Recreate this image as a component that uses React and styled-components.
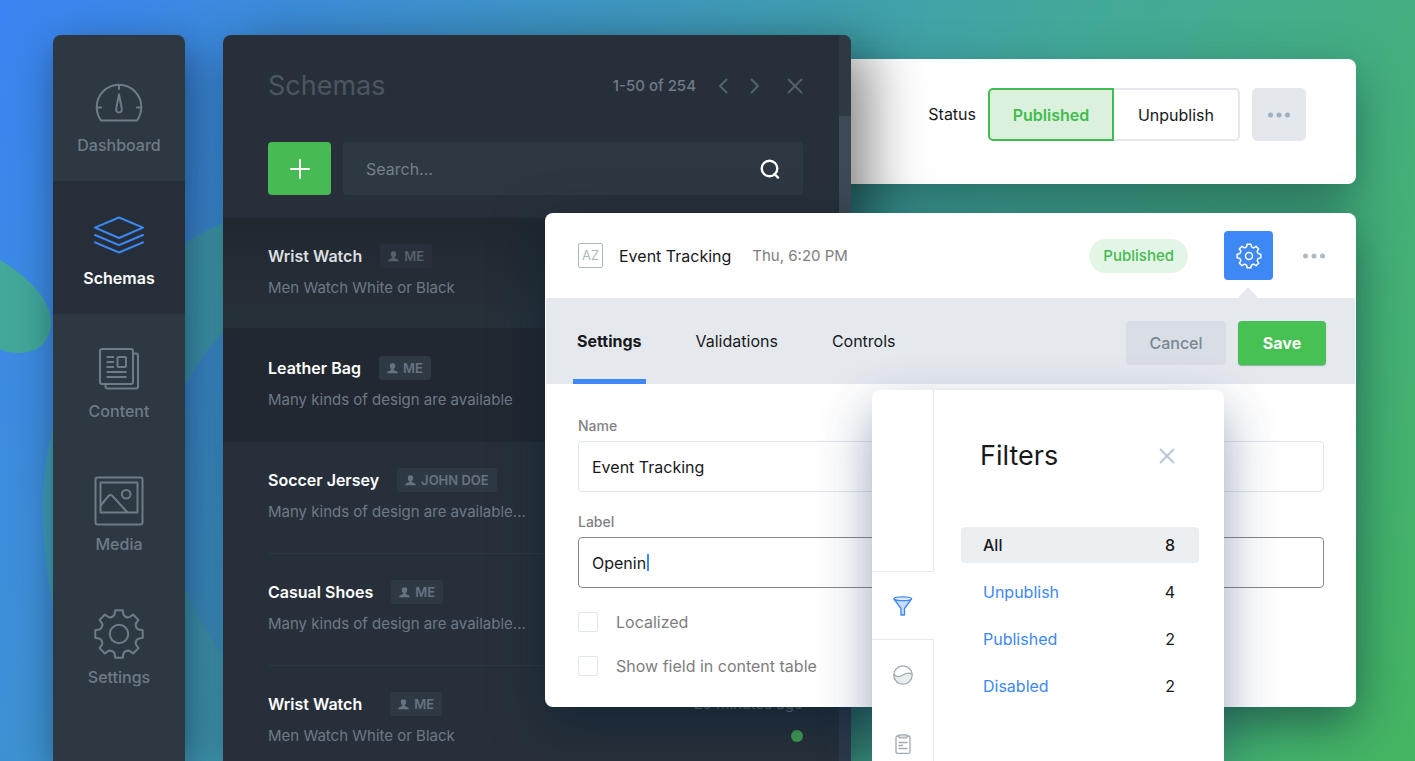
import React from "react";
import styled, { createGlobalStyle, css } from "styled-components";

const GlobalStyle = createGlobalStyle`
  *, *::before, *::after { box-sizing: border-box; }
  body {
    margin: 0;
    font-family: Inter, "Liberation Sans", sans-serif;
    font-size: 16px;
    line-height: 20px;
    color: #17191c;
    overflow: hidden;
  }
  button, input {
    font: inherit;
    color: inherit;
    margin: 0;
    padding: 0;
    border: 0;
    background: none;
  }
  button { cursor: pointer; }
  input:focus { outline: none; }
  h1, h2, h3, p, ul { margin: 0; padding: 0; font-weight: inherit; list-style: none; }
  svg { display: block; }
`;

/* ---------- desktop ---------- */

const Desktop = styled.div`
  position: relative;
  isolation: isolate;
  display: grid;
  height: 100vh;
  overflow: hidden;
  grid-template-columns: 53px 132px 38px 322fr 306fr 21fr 352fr 132fr 59px;
  grid-template-rows: 35px 24px 125px 29px 177px 317px minmax(0, 1fr);
  background: linear-gradient(118deg, #3b84f3 0%, #3f9bbd 38%, #42a999 60%, #44b07d 80%, #44b661 100%);
`;

const Backdrop = styled.svg`
  position: absolute;
  inset: 0;
  width: 100%;
  height: 100%;
  z-index: -1;
`;

/* ---------- sidebar ---------- */

const Sidebar = styled.nav`
  grid-area: 2 / 2 / -1 / 3;
  z-index: 2;
  padding-top: 13px;
  border-radius: 8px 8px 0 0;
  background: #2e3842;
  box-shadow: 6px 14px 44px rgba(12, 30, 60, 0.6);
`;

const NavItem = styled.a`
  display: flex;
  flex-direction: column;
  align-items: center;
  gap: 8px;
  height: 133px;
  padding-top: 29px;
  font-weight: 500;
  text-decoration: none;
  color: ${(p) => (p.$active ? "#ffffff" : "#6e7b88")};
  background: ${(p) => (p.$active ? "#262f39" : "transparent")};
  ${(p) => p.$active && css`font-weight: 600;`}
  svg { color: ${(p) => (p.$active ? "#3d89f8" : "#6e7b88")}; }
`;

/* ---------- schemas window ---------- */

const SchemasPanel = styled.section`
  grid-area: 2 / 4 / -1 / 6;
  z-index: 3;
  display: flex;
  min-height: 0;
  overflow: hidden;
  border-radius: 8px 8px 0 0;
  background: #27303a;
`;

const SchemasShadow = styled.div`
  grid-area: 2 / 4 / -1 / 6;
  z-index: 1;
  border-radius: 8px 8px 0 0;
  box-shadow: 14px 16px 56px 2px rgba(0, 0, 0, 0.5);
`;

const SchemasMain = styled.div`
  flex: 1;
  min-width: 0;
`;

const SchemasTop = styled.header`
  padding: 31px 36px 23px 45px;
`;

const TitleBar = styled.div`
  display: flex;
  align-items: center;
  height: 40px;
`;

const PanelTitle = styled.h1`
  flex: 1;
  font-size: 27px;
  line-height: 40px;
  font-weight: 400;
  color: #4c5661;
`;

const PageCount = styled.span`
  margin-right: 19px;
  font-size: 15px;
  font-weight: 500;
  color: #6f7b88;
`;

const PagerButton = styled.button`
  display: grid;
  place-items: center;
  width: 16px;
  height: 20px;
  color: #56616d;
  margin-left: ${(p) => p.$gap || 0}px;
`;

const Tools = styled.div`
  display: flex;
  gap: 12px;
  height: 53px;
  margin-top: 36px;
`;

const AddButton = styled.button`
  display: grid;
  place-items: center;
  width: 63px;
  border-radius: 4px;
  background: #46bb54;
  color: #fff;
`;

const SearchBox = styled.label`
  display: flex;
  flex: 1;
  align-items: center;
  padding: 0 23px;
  border-radius: 4px;
  background: #2e3842;
  color: #fff;
`;

const SearchInput = styled.input`
  flex: 1;
  min-width: 0;
  &::placeholder { color: #74808c; opacity: 1; }
`;

const ScrollTrack = styled.div`
  width: 12px;
  padding-top: 81px;
  background: #2f3944;
`;

const ScrollThumb = styled.div`
  height: 100%;
  background: linear-gradient(#3d4956 0 60%, #2f3a4a 85%);
`;

const RowBody = styled.div`
  display: flex;
  flex: 1;
  justify-content: space-between;
  padding: 26px 36px 0 0;
  border-bottom: 1px solid ${(p) => (p.$line ? "#2d3843" : "transparent")};
`;

const RowHead = styled.div`
  display: flex;
  align-items: center;
  gap: ${(p) => (p.$loose ? 28 : 18)}px;
  height: 24px;
`;

const RowTitle = styled.h2`
  font-size: 16px;
  font-weight: 600;
  color: #fff;
`;

const Owner = styled.span`
  display: flex;
  align-items: center;
  gap: 5px;
  height: 24px;
  padding: 0 8px;
  border-radius: 3px;
  font-size: 13px;
  font-weight: 600;
  color: #667382;
  background: #2f3944;
`;

const RowText = styled.p`
  margin-top: 10px;
  font-size: 15px;
  color: #6d7987;
`;

const SchemaRow = styled.li`
  display: flex;
  height: 112px;
  padding-left: 45px;
  ${(p) => p.$first && css`
    background: linear-gradient(#1f272f 0, #242c35 50%, #27313a 100%);
    ${RowTitle} { color: #dcdee0; }
    ${Owner} { color: #56616d; background: #28313b; }
  `}
  ${(p) => p.$selected && css`
    position: relative;
    height: 114px;
    margin-top: -2px;
    padding-top: 2px;
    background: #212831;
  `}
`;

const RowMeta = styled.div`
  display: flex;
  flex-direction: column;
  align-items: flex-end;
  gap: 16px;
  padding-top: 2px;
  font-size: 15px;
  color: #6d7987;
`;

const LiveDot = styled.span`
  width: 12px;
  height: 12px;
  border-radius: 50%;
  background: #41a353;
`;

/* ---------- status window ---------- */

const StatusPanel = styled.section`
  grid-area: 3 / 5 / 4 / 9;
  display: flex;
  align-items: flex-start;
  justify-content: flex-end;
  gap: 12px;
  padding: 29px 50px 0 0;
  border-radius: 8px;
  background: #fff;
  box-shadow: 0 18px 48px rgba(14, 50, 50, 0.5);
`;

const StatusLabel = styled.span`
  line-height: 53px;
`;

const Segment = styled.div`
  display: flex;
`;

const SegmentButton = styled.button`
  width: 126px;
  height: 53px;
  border: 2px solid #e4e8ed;
  border-left: 0;
  border-radius: 0 5px 5px 0;
  ${(p) => p.$on && css`
    border: 2px solid #40bd4c;
    border-radius: 5px 0 0 5px;
    font-weight: 600;
    color: #40bd4c;
    background: #dbf1de;
  `}
`;

const MoreButton = styled.button`
  display: grid;
  place-items: center;
  width: ${(p) => (p.$filled ? 54 : 24)}px;
  height: 53px;
  border-radius: 5px;
  color: ${(p) => (p.$filled ? "#9fb0c4" : "#aeb9c7")};
  background: ${(p) => (p.$filled ? "#e4e8ed" : "transparent")};
`;

/* ---------- editor window ---------- */

const EditorPanel = styled.section`
  grid-area: 5 / 5 / 7 / 9;
  z-index: 4;
  border-radius: 8px;
  background: #fff;
  box-shadow: 0 16px 50px rgba(8, 30, 50, 0.55);
`;

const EditorHeader = styled.header`
  display: flex;
  align-items: center;
  height: 85px;
  padding: 0 30px 0 33px;
`;

const EditorTitle = styled.h2`
  margin: 0 21px 0 16px;
  font-size: 16px;
  font-weight: 400;
`;

const Stamp = styled.time`
  flex: 1;
  font-size: 15px;
  color: #7e7e80;
`;

const Pill = styled.span`
  padding: 0 14px;
  border-radius: 17px;
  font-size: 15px;
  font-weight: 500;
  line-height: 34px;
  color: #44bb50;
  background: #e3f6e5;
`;

const GearButton = styled.button`
  position: relative;
  display: grid;
  place-items: center;
  width: 49px;
  height: 49px;
  margin: 0 29px 0 36px;
  border-radius: 4px;
  color: #fff;
  background: #3d88f4;
  &::after {
    content: "";
    position: absolute;
    top: 56px;
    left: 14px;
    border: solid transparent;
    border-width: 0 10px 11px;
    border-bottom-color: #e5e9ee;
  }
`;

const TabBar = styled.div`
  display: flex;
  justify-content: space-between;
  height: 86px;
  margin: 0 1px;
  padding: 0 29px 0 27px;
  background: #e5e9ee;
`;

const Tabs = styled.div`
  display: flex;
  gap: 46px;
`;

const Tab = styled.button`
  padding: 0 4px;
  border: solid transparent;
  border-width: 5px 0;
  ${(p) => p.$active && css`
    font-weight: 700;
    border-bottom-color: #3d88f4;
  `}
`;

const Actions = styled.div`
  display: flex;
  gap: 12px;
  padding-top: 23px;
`;

const ActionButton = styled.button`
  height: 44px;
  width: ${(p) => (p.$primary ? 88 : 100)}px;
  border-radius: 4px;
  font-weight: ${(p) => (p.$primary ? 700 : 500)};
  color: ${(p) => (p.$primary ? "#fff" : "#788691")};
  background: ${(p) => (p.$primary ? "#47c153" : "#d9dee6")};
  ${(p) => p.$primary && css`box-shadow: 0 1px 1px rgba(30, 120, 50, 0.5);`}
`;

const Form = styled.form`
  padding: 32px 32px 0 33px;
`;

const Field = styled.div`
  margin-bottom: 20px;
`;

const FieldLabel = styled.label`
  display: block;
  margin-bottom: 5px;
  font-size: 14px;
  font-weight: 500;
  color: #808286;
`;

const InputBox = styled.div`
  display: flex;
  align-items: center;
  height: 51px;
  padding: 0 13px;
  border: ${(p) => (p.$focus ? "1px solid #85878a" : "1px solid #dfe5ec")};
  border-radius: 4px;
`;

const TextInput = styled.input`
  height: 24px;
  ${(p) => (p.$focus ? css`field-sizing: content;` : css`width: 100%;`)}
`;

const Caret = styled.span`
  width: 2px;
  height: 17px;
  margin-left: 1px;
  background: #3d88f4;
`;

const CheckRow = styled.label`
  display: flex;
  align-items: center;
  gap: 18px;
  height: 20px;
  margin-top: 24px;
  color: #7e7e80;
`;

const CheckBox = styled.input`
  appearance: none;
  width: 20px;
  height: 20px;
  border: 1px solid #dfe6ee;
  border-radius: 2px;
  background: #fff;
`;

/* ---------- filters window ---------- */

const FiltersPanel = styled.aside`
  grid-area: 6 / 7 / -1 / 8;
  z-index: 5;
  display: flex;
  min-height: 0;
  border-radius: 8px 8px 0 0;
  background: #fff;
  box-shadow: 0 22px 52px rgba(28, 56, 104, 0.45);
`;

const Rail = styled.div`
  display: flex;
  flex-direction: column;
  width: 62px;
  &::before {
    content: "";
    flex: 0 0 181px;
    border-right: 1px solid #e5eaef;
  }
`;

const RailTab = styled.button`
  display: grid;
  flex: 0 0 69px;
  place-items: center;
  border-right: 1px solid #e5eaef;
  color: #9fabb0;
  ${(p) => p.$active && css`
    border: solid #e5eaef;
    border-width: 1px 0;
    color: #3d88f4;
  `}
`;

const FiltersBody = styled.div`
  flex: 1;
  padding: 46px 25px 0 27px;
`;

const FiltersHead = styled.div`
  display: flex;
  align-items: center;
  justify-content: space-between;
  height: 40px;
  padding: 0 24px 0 19px;
  margin-bottom: 51px;
`;

const FiltersTitle = styled.h2`
  font-size: 27px;
  line-height: 40px;
  font-weight: 400;
`;

const CloseButton = styled.button`
  color: #b8c6d4;
`;

const FilterList = styled.ul`
  display: flex;
  flex-direction: column;
  gap: 11px;
`;

const FilterLink = styled.a`
  display: flex;
  align-items: center;
  justify-content: space-between;
  height: 36px;
  padding: 0 24px 0 22px;
  border-radius: 4px;
  color: #3d88f4;
  text-decoration: none;
  ${(p) => p.$active && css`
    color: #17191c;
    font-weight: 500;
    background: #ebeff2;
  `}
`;

const FilterCount = styled.span`
  color: #17191c;
`;

/* ---------- icons ---------- */

const Icon = ({ w, h = w, stroke = 2, children }) => (
  <svg width={w} height={h} viewBox={`0 0 ${w} ${h}`} fill="none" stroke="currentColor"
    strokeWidth={stroke} strokeLinecap="round" strokeLinejoin="round" aria-hidden="true">
    {children}
  </svg>
);

const gearPath = (c, size) => {
  const at = (r, deg) => {
    const a = ((deg - 90) * Math.PI) / 180;
    return `${(c + r * size * Math.cos(a)).toFixed(2)} ${(c + r * size * Math.sin(a)).toFixed(2)}`;
  };
  const arc = (0.195 * size).toFixed(2);
  let d = `M${at(1, -9)}`;
  for (let k = 0; k < 8; k += 1) {
    const t = k * 45;
    d += `L${at(1, t + 9)}L${at(0.91, t + 11)}A${arc} ${arc} 0 0 0 ${at(0.91, t + 34)}L${at(1, t + 36)}`;
  }
  return `${d}Z`;
};

const DashboardIcon = () => (
  <Icon w={50}>
    <path d="M7 43.5H43Q47.3 37.500 47.300 30A22.300 22.300 0 0 0 2.700 30Q2.700 37.500 7 43.500ZM25 8V12M3 30.500H7M43 30.500H47" />
    <path d="M25 17.500L27.800 31.500Q28 35.500 25 35.500Q22 35.500 22.200 31.500Z" />
  </Icon>
);

const LayersIcon = () => (
  <Icon w={50}>
    <path d="M25 7.500L49 17.700L25 28L1 17.700ZM1 25L25 35.200L49 25M1 32.300L25 42.500L49 32.300" />
  </Icon>
);

const ContentIcon = () => (
  <Icon w={50}>
    <rect x="6" y="6" width="33" height="35" rx="2" />
    <path d="M39.500 10.500H42Q44 10.500 44 12.500V43.500Q44 45.500 42 45.500H13.500Q11.500 45.500 11.500 43.500V41" />
    <path strokeLinecap="butt" d="M12.500 14H20M12.500 19H20M12.500 24H20M12.500 29H32.500M12.500 34H32.500" />
    <rect x="23.500" y="14" width="8.500" height="10" rx="1" />
  </Icon>
);

const MediaIcon = () => (
  <Icon w={50}>
    <rect x="1.500" y="1.500" width="47" height="47" rx="2" />
    <rect x="6.500" y="6.500" width="37" height="30" />
    <path d="M7 29L14.500 20Q16.500 18 18.500 20L33 36" />
    <circle cx="32.200" cy="18.300" r="4.300" />
  </Icon>
);

const GearIcon = () => (
  <Icon w={50}>
    <path d={gearPath(25, 24)} />
    <circle cx="25" cy="25" r="9.200" />
  </Icon>
);

const SmallGearIcon = () => (
  <Icon w={26} stroke={1.5}>
    <path d={gearPath(13, 12)} />
    <circle cx="13" cy="13" r="3.500" />
  </Icon>
);

const CrossIcon = () => (
  <Icon w={16} stroke={1.8}>
    <path d="M1.500 1.500L14.500 14.500M14.500 1.500L1.500 14.500" />
  </Icon>
);

const DotsIcon = () => (
  <svg width="24" height="6" viewBox="0 0 24 6" fill="currentColor" aria-hidden="true">
    <circle cx="3.500" cy="3" r="2.500" />
    <circle cx="12" cy="3" r="2.500" />
    <circle cx="20.500" cy="3" r="2.500" />
  </svg>
);

const PersonIcon = () => (
  <svg width="11" height="11" viewBox="0 0 11 11" fill="currentColor" aria-hidden="true">
    <path d="M5.500 0.300C7.300 0.300 8.300 1.500 8.200 3.200C8.100 4.800 7.400 5.500 6.700 6.200V7L9.700 8.200Q10.800 8.700 10.800 10.300H0.200Q0.200 8.700 1.300 8.200L4.300 7V6.200C3.600 5.500 2.900 4.800 2.800 3.200C2.700 1.500 3.700 0.300 5.500 0.300Z" />
  </svg>
);

const LetterBox = styled.span`
  display: grid;
  place-items: center;
  width: 25px;
  height: 25px;
  border: 1px solid #a9b9bf;
  border-radius: 2px;
  font-size: 13px;
  line-height: 13px;
  color: #a9b9bf;
`;

const FunnelIcon = () => (
  <Icon w={20} stroke={1.3}>
    <path fill="#c9ddfb" d="M1 3L8 12.500V19H11.500V12.500L18.500 3Z" />
    <ellipse cx="9.800" cy="2.700" rx="8.800" ry="1.900" fill="#dfeafc" />
  </Icon>
);

const WaveIcon = () => (
  <Icon w={20} stroke={1.3}>
    <path fill="#e9edef" stroke="none" d="M1 9C4 13 7 12 10 10S16 7 19 9.500A9 9 0 0 1 1 9Z" />
    <circle cx="10" cy="10" r="9.200" />
    <path d="M1 9.500C4 12.800 7 12 10 10S16 7.500 19 9" />
  </Icon>
);

const ClipboardIcon = () => (
  <Icon w={16} h={20} stroke={1.3}>
    <rect x="1" y="2" width="14" height="17.300" rx="1.500" />
    <rect x="4" y="0.800" width="8" height="3" rx="0.800" fill="#dfe5e8" />
    <path d="M4 8.500H12M4 11.500H7.500M4 14.500H12" />
  </Icon>
);

/* ---------- content ---------- */

const NAV = [
  { label: "Dashboard", icon: DashboardIcon },
  { label: "Schemas", icon: LayersIcon, active: true },
  { label: "Content", icon: ContentIcon },
  { label: "Media", icon: MediaIcon },
  { label: "Settings", icon: GearIcon },
];

const SCHEMAS = [
  { title: "Wrist Watch", owner: "ME", text: "Men Watch White or Black", first: true },
  { title: "Leather Bag", owner: "ME", text: "Many kinds of design are available", selected: true },
  { title: "Soccer Jersey", owner: "JOHN DOE", text: "Many kinds of design are available...", line: true },
  { title: "Casual Shoes", owner: "ME", text: "Many kinds of design are available...", line: true },
  { title: "Wrist Watch", owner: "ME", text: "Men Watch White or Black", loose: true, time: "20 minutes ago" },
];

const FILTERS = [
  { label: "All", count: 8, active: true },
  { label: "Unpublish", count: 4 },
  { label: "Published", count: 2 },
  { label: "Disabled", count: 2 },
];

export default function App() {
  return (
    <>
      <GlobalStyle />
      <Desktop>
        <Backdrop viewBox="0 0 1415 761" preserveAspectRatio="none" aria-hidden="true">
          <defs>
            <linearGradient id="leaf" x1="0" y1="0" x2="0.400" y2="1">
              <stop offset="0" stopColor="#41a99b" />
              <stop offset="1" stopColor="#429fb0" />
            </linearGradient>
          </defs>
          <path fill="#42a99a" d="M0 260C24 274 51 298 51 322C51 341 38 353 19 353Q8 353 0 349Z" />
          <path fill="url(#leaf)" opacity="0.7" d="M260 212C190 222 43 320 43 510C43 610 75 700 120 761H290C260 700 170 610 160 500C160 420 190 350 260 300Z" />
        </Backdrop>

        <Sidebar aria-label="Main">
          {NAV.map(({ label, icon: Glyph, active }) => (
            <NavItem key={label} href="#" $active={active}>
              <Glyph />
              {label}
            </NavItem>
          ))}
        </Sidebar>

        <StatusPanel>
          <StatusLabel>Status</StatusLabel>
          <Segment>
            <SegmentButton $on>Published</SegmentButton>
            <SegmentButton>Unpublish</SegmentButton>
          </Segment>
          <MoreButton $filled aria-label="More"><DotsIcon /></MoreButton>
        </StatusPanel>

        <SchemasShadow />
        <SchemasPanel>
          <SchemasMain>
            <SchemasTop>
              <TitleBar>
                <PanelTitle>Schemas</PanelTitle>
                <PageCount>1-50 of 254</PageCount>
                <PagerButton aria-label="Previous page">
                  <Icon w={10} h={16}><path d="M8.500 1.500L2 8L8.500 14.500" /></Icon>
                </PagerButton>
                <PagerButton aria-label="Next page" $gap={16}>
                  <Icon w={10} h={16}><path d="M1.500 1.500L8 8L1.500 14.500" /></Icon>
                </PagerButton>
                <PagerButton aria-label="Close" $gap={24}><CrossIcon /></PagerButton>
              </TitleBar>
              <Tools>
                <AddButton aria-label="Add schema">
                  <Icon w={20}><path d="M10 1V19M1 10H19" /></Icon>
                </AddButton>
                <SearchBox>
                  <SearchInput type="text" placeholder="Search..." aria-label="Search" />
                  <Icon w={20} stroke={2.4}>
                    <circle cx="9.500" cy="9.500" r="7.800" />
                    <path d="M14.500 15L18 18.600" />
                  </Icon>
                </SearchBox>
              </Tools>
            </SchemasTop>
            <ul>
              {SCHEMAS.map((s, i) => (
                <SchemaRow key={i} $first={s.first} $selected={s.selected}>
                  <RowBody $line={s.line}>
                    <div>
                      <RowHead $loose={s.loose}>
                        <RowTitle>{s.title}</RowTitle>
                        <Owner><PersonIcon />{s.owner}</Owner>
                      </RowHead>
                      <RowText>{s.text}</RowText>
                    </div>
                    {s.time && <RowMeta>{s.time}<LiveDot /></RowMeta>}
                  </RowBody>
                </SchemaRow>
              ))}
            </ul>
          </SchemasMain>
          <ScrollTrack><ScrollThumb /></ScrollTrack>
        </SchemasPanel>

        <EditorPanel>
          <EditorHeader>
            <LetterBox>AZ</LetterBox>
            <EditorTitle>Event Tracking</EditorTitle>
            <Stamp>Thu, 6:20 PM</Stamp>
            <Pill>Published</Pill>
            <GearButton aria-label="Field settings"><SmallGearIcon /></GearButton>
            <MoreButton aria-label="More"><DotsIcon /></MoreButton>
          </EditorHeader>
          <TabBar>
            <Tabs>
              <Tab $active>Settings</Tab>
              <Tab>Validations</Tab>
              <Tab>Controls</Tab>
            </Tabs>
            <Actions>
              <ActionButton>Cancel</ActionButton>
              <ActionButton $primary>Save</ActionButton>
            </Actions>
          </TabBar>
          <Form>
            <Field>
              <FieldLabel htmlFor="name">Name</FieldLabel>
              <InputBox>
                <TextInput id="name" type="text" defaultValue="Event Tracking" />
              </InputBox>
            </Field>
            <Field>
              <FieldLabel htmlFor="label">Label</FieldLabel>
              <InputBox $focus>
                <TextInput id="label" type="text" defaultValue="Openin" $focus />
                <Caret />
              </InputBox>
            </Field>
            <CheckRow><CheckBox type="checkbox" />Localized</CheckRow>
            <CheckRow><CheckBox type="checkbox" />Show field in content table</CheckRow>
          </Form>
        </EditorPanel>

        <FiltersPanel>
          <Rail>
            <RailTab $active aria-label="Filters"><FunnelIcon /></RailTab>
            <RailTab aria-label="Activity"><WaveIcon /></RailTab>
            <RailTab aria-label="Notes"><ClipboardIcon /></RailTab>
          </Rail>
          <FiltersBody>
            <FiltersHead>
              <FiltersTitle>Filters</FiltersTitle>
              <CloseButton aria-label="Close filters"><CrossIcon /></CloseButton>
            </FiltersHead>
            <FilterList>
              {FILTERS.map((f) => (
                <li key={f.label}>
                  <FilterLink href="#" $active={f.active}>
                    {f.label}
                    <FilterCount>{f.count}</FilterCount>
                  </FilterLink>
                </li>
              ))}
            </FilterList>
          </FiltersBody>
        </FiltersPanel>
      </Desktop>
    </>
  );
}
